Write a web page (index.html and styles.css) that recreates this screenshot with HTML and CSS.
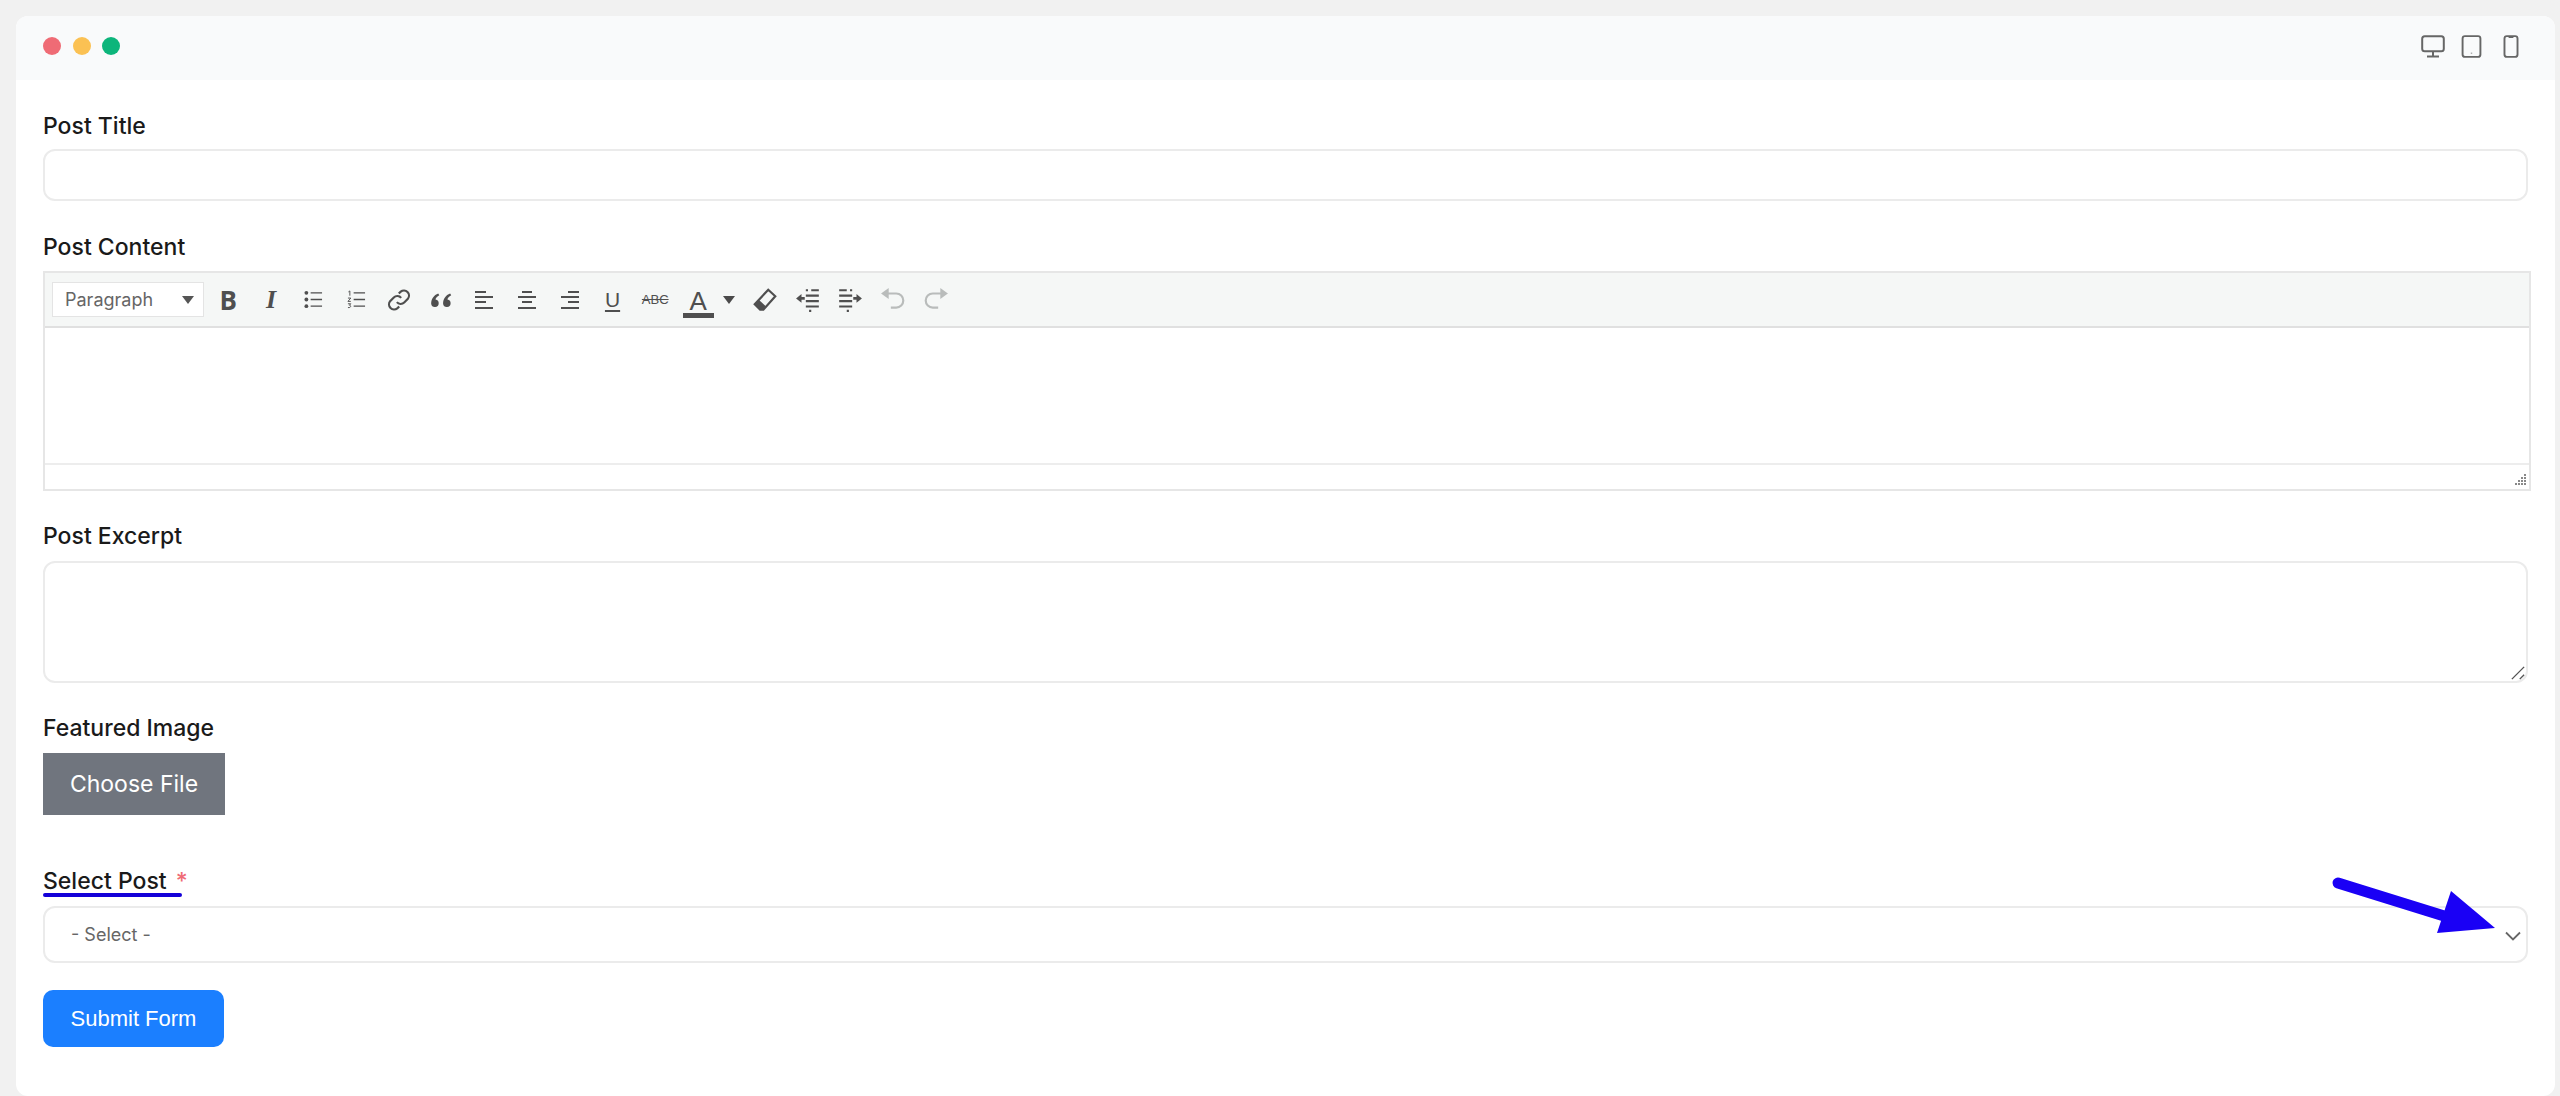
FILE: index.html
```html
<!DOCTYPE html>
<html lang="en">
<head>
<meta charset="utf-8">
<title>Form preview</title>
<link rel="stylesheet" href="styles.css">
</head>
<body>
<div class="window">
  <header class="bar">
    <div class="dots"><span class="dot red"></span><span class="dot yellow"></span><span class="dot green"></span></div>
    <div class="devices">
      <svg class="dev dev-monitor" viewBox="0 0 24 23"><rect x="1.2" y="1.2" width="21.6" height="15" rx="2.5"/><path d="M12 16.5v4.5M6 21.5h12"/></svg>
      <svg class="dev dev-tablet" viewBox="0 0 21 24"><rect x="1.2" y="1.2" width="18.6" height="21.6" rx="2.5"/><path class="thin" d="M10.5 18.6v.8"/></svg>
      <svg class="dev dev-phone" viewBox="0 0 16 24"><rect x="1.2" y="1.2" width="13.6" height="21.6" rx="2.5"/><path d="M5.5 2h5"/></svg>
    </div>
  </header>
  <main class="form">
    <label class="label l-title">Post Title</label>
    <div class="input"></div>

    <label class="label l-content">Post Content</label>
    <div class="editor">
      <div class="toolbar">
        <div class="format"><span>Paragraph</span><i class="caret"></i></div>
        <span class="tb tb-b">B</span>
        <span class="tb tb-i">I</span>
        <span class="tb"><svg class="ic" viewBox="0 0 20 20"><path class="hair" d="M7 3h12M7 10h12M7 17h12"/><circle class="fill" cx="2.5" cy="3" r="2"/><circle class="fill" cx="2.5" cy="10" r="2"/><circle class="fill" cx="2.5" cy="17" r="2"/></svg></span>
        <span class="tb"><svg class="ic" viewBox="0 0 20 20"><path class="hair" d="M7 3h12M7 10h12M7 17h12"/><path class="thin" d="M1.5 2l1.5-1v5M1 8.5h3l-3 3.5h3M1 14.5h3l-1.5 1.5c2 0 2 3-1.5 2.5"/></svg></span>
        <span class="tb"><svg class="ic ic-xl" viewBox="0 0 24 24"><path d="M10 14a4.600 4.600 0 0 0 6.800.3l3.400-3.400a4.700 4.700 0 0 0-6.600-6.600l-1.800 1.800"/><path d="M14 10a4.600 4.600 0 0 0-6.800-.3l-3.400 3.400a4.700 4.700 0 0 0 6.600 6.600l1.800-1.800"/></svg></span>
        <span class="tb"><svg class="ic ic-xl" viewBox="0 0 24 24"><path class="fill" d="M2 15.500c0-4.500 2.500-8 6.500-9.500l1 1.600c-2 1-3.200 2.400-3.500 3.900a3.500 3.500 0 1 1-4 4zM13 15.500c0-4.500 2.500-8 6.500-9.500l1 1.600c-2 1-3.200 2.400-3.500 3.900a3.500 3.500 0 1 1-4 4z"/></svg></span>
        <span class="tb"><svg class="ic ic-al" viewBox="0 0 20 20"><path d="M1 2h11M1 7h18M1 12h11M1 18h18"/></svg></span>
        <span class="tb"><svg class="ic ic-al" viewBox="0 0 20 20"><path d="M5 2h10M1 7h18M5 12h10M1 18h18"/></svg></span>
        <span class="tb"><svg class="ic ic-al" viewBox="0 0 20 20"><path d="M8 2h11M1 7h18M8 12h11M1 18h18"/></svg></span>
        <span class="tb tb-u">U</span>
        <span class="tb tb-s">ABC</span>
        <span class="tb tb-a">A</span>
        <span class="tb-caret"><i class="caret dark"></i></span>
        <span class="tb"><svg class="ic ic-xl" viewBox="0 0 24 24"><path d="M15 2.500l6.500 6L10.500 21h-3l-5-5z"/><path class="fill" d="M2.500 16l5 5h3l2.500-3-6.500-6z"/></svg></span>
        <span class="tb"><svg class="ic ic-xl" viewBox="0 0 24 24"><path d="M10 3h2M15 3h7M10 8h12M10 13h12M10 18h12M13 22h2"/><path class="fill" d="M1 10.500l5-4v8z"/><path class="thick" d="M4 10.500h5"/></svg></span>
        <span class="tb"><svg class="ic ic-xl" viewBox="0 0 24 24"><path d="M2 3h7M12 3h2M2 8h12M2 13h12M2 18h12M9 22h2"/><path class="fill" d="M23 10.500l-5-4v8z"/><path class="thick" d="M20 10.500h-5"/></svg></span>
        <span class="tb"><svg class="ic ic-xl off" viewBox="0 0 24 24"><path class="fill" d="M1 6l7-5v10z"/><path d="M7 6h8a6.500 6.500 0 0 1 0 13h-5"/></svg></span>
        <span class="tb"><svg class="ic ic-xl off" viewBox="0 0 24 24"><path class="fill" d="M23 6l-7-5v10z"/><path d="M17 6H9a6.500 6.500 0 0 0 0 13h5"/></svg></span>
      </div>
      <div class="edit-area"></div>
      <div class="status">
        <svg class="grip" viewBox="0 0 14 14"><path d="M11 1h2v2h-2zM8 4h2v2H8zM11 4h2v2h-2zM5 7h2v2H5zM8 7h2v2H8zM11 7h2v2h-2zM2 10h2v2H2zM5 10h2v2H5zM8 10h2v2H8zM11 10h2v2h-2z"/></svg>
      </div>
    </div>

    <label class="label l-excerpt">Post Excerpt</label>
    <div class="input area">
      <svg class="resize" viewBox="0 0 16 16"><path d="M1 15L15 1M10 15l5-5"/></svg>
    </div>

    <label class="label l-image">Featured Image</label>
    <button class="file-btn" type="button">Choose File</button>

    <label class="label l-select">Select Post <span class="req">*</span></label>
    <div class="input select">
      <span>- Select -</span>
      <svg class="chev" viewBox="0 0 16 10"><path d="M1 1.500l7 7 7-7"/></svg>
    </div>

    <button class="submit" type="button">Submit Form</button>
  </main>

  <svg class="annot-arrow" viewBox="0 0 180 70"><path class="shaft" d="M6 6L125 43"/><path class="head" d="M119 14L105 56 163 51z"/></svg>
  <span class="annot-line"></span>
</div>
</body>
</html>
```
FILE: styles.css
```css
* { box-sizing: border-box; }
html, body { margin: 0; height: 100%; }
body {
  background: #f1f1f1;
  padding: 16px 5px 0 16px;
  font-family: Inter, "Liberation Sans", sans-serif;
  color: #1a1a1a;
  overflow: hidden;
}
.window {
  position: relative;
  height: 1080px;
  background: #fff;
  border-radius: 12px;
  overflow: hidden;
}
.bar {
  height: 64px;
  background: #f9fafb;
  display: flex;
  align-items: center;
  justify-content: space-between;
  padding: 0 36px 0 27px;
}
.dots { display: flex; gap: 11.5px; margin-top: -4px; }
.dot { width: 18px; height: 18px; border-radius: 50%; }
.red { background: #ef6b75; }
.yellow { background: #fbc153; }
.green { background: #0db57b; }
.devices { display: flex; align-items: center; gap: 18px; margin-top: -4px; }
.dev { fill: none; stroke: #666; stroke-width: 2; display: block; height: 23px; }
.dev-monitor { width: 24px; margin-right: -2px; }
.dev-tablet { width: 21px; margin-right: 3px; }
.dev-phone { width: 16px; }
.dev .thin { stroke-width: 1.5; }

.form { padding: 0 27px; display: flex; flex-direction: column; align-items: flex-start; }
.label { display: block; font-size: 23px; font-weight: 450; line-height: 30px; }
.l-title { margin-top: 31px; margin-bottom: 8px; }
.l-content { margin-top: 31px; margin-bottom: 9px; }
.l-excerpt { margin-top: 30px; margin-bottom: 10px; }
.l-image { margin-top: 30px; margin-bottom: 10px; }
.l-select { margin-top: 51px; margin-bottom: 10px; }
.input {
  width: 100%;
  height: 52px;
  border: 2px solid #ebebeb;
  border-radius: 12px;
  background: #fff;
  position: relative;
}
.area { height: 122px; }
.resize { position: absolute; right: 1px; bottom: 1px; width: 14px; height: 14px; fill: none; stroke: #555; stroke-width: 1.6; }
.select {
  height: 57px;
  display: flex;
  align-items: center;
  justify-content: space-between;
  padding: 0 5px 0 26px;
  font-size: 18px;
  color: #666;
}
.chev { width: 16px; height: 10px; fill: none; stroke: #666; stroke-width: 1.8; margin-top: 2px; }

.editor { width: calc(100% + 3px); border: 2px solid #e6e6e6; background: #fff; }
.toolbar {
  height: 55px;
  background: #f5f7f6;
  border-bottom: 2px solid #e0e0e0;
  display: flex;
  align-items: center;
  padding-left: 7px;
}
.format {
  width: 152px;
  height: 35px;
  background: #fff;
  border: 1px solid #e4e4e4;
  display: flex;
  align-items: center;
  justify-content: space-between;
  padding: 0 9px 0 12px;
  font-size: 18px;
  color: #666;
  margin-right: 3px;
}
.caret { width: 0; height: 0; border: 6px solid transparent; border-top: 8px solid #555; border-bottom: 0; display: block; }
.caret.dark { border-top-color: #4a4a4a; }
.tb {
  width: 42.7px;
  height: 34px;
  display: flex;
  align-items: center;
  justify-content: center;
  color: #4f4f4f;
  font-family: "Liberation Sans", sans-serif;
  flex: none;
}
.tb-b { font-size: 26px; font-weight: 700; font-family: "Open Sans", sans-serif; }
.tb-i { font-size: 26px; font-weight: 700; font-style: italic; font-family: "Liberation Serif", serif; }
.tb-u { font-size: 21px; text-decoration: underline; text-underline-offset: 3px; text-decoration-thickness: 2px; }
.tb-s { font-size: 13px; text-decoration: line-through; }
.tb-a { width: 31px; margin-left: 6px; font-size: 26px; border-bottom: 5px solid #4f4f4f; height: 30px; line-height: 26px; align-items: flex-start; margin-top: 6px; }
.tb-caret { width: 30px; display: flex; justify-content: center; flex: none; }
.ic { width: 19px; height: 19px; fill: none; stroke: #4f4f4f; stroke-width: 2; overflow: visible; }
.ic-al { width: 20px; height: 20px; stroke-width: 2.2; }
.ic-xl { width: 26px; height: 26px; }
.ic .fill { fill: #4f4f4f; stroke: none; }
.ic .thin { stroke-width: 1; }
.ic .thick { stroke-width: 2.5; }
.ic .hair { stroke-width: 1.5; }
.ic.off { stroke: #b9bcbb; }
.ic.off .fill { fill: #b9bcbb; }
.edit-area { height: 135px; }
.status {
  height: 26px;
  border-top: 2px solid #ededed;
  display: flex;
  justify-content: flex-end;
  align-items: flex-end;
  padding: 0 2px 2px 0;
}
.grip { width: 14px; height: 14px; fill: #888; display: block; }

.file-btn {
  width: 182px;
  height: 62px;
  border: 0;
  background: #70757e;
  color: #fff;
  font-family: Inter, sans-serif;
  font-size: 23px;
  padding: 0;
}
.req { color: #ef6b75; margin-left: 3px; }
.submit {
  margin-top: 27px;
  width: 181px;
  height: 57px;
  border: 0;
  border-radius: 10px;
  background: #1b7fff;
  color: #fff;
  font-family: "Liberation Sans", sans-serif;
  font-size: 22px;
  padding: 0;
}

.annot-arrow {
  position: absolute;
  left: 2316px;
  top: 861px;
  width: 180px;
  height: 70px;
  overflow: visible;
}
.shaft { fill: none; stroke: #1a00f5; stroke-width: 11; stroke-linecap: round; }
.head { fill: #1a00f5; }
.annot-line {
  position: absolute;
  left: 27px;
  top: 877px;
  width: 139px;
  height: 4px;
  border-radius: 2px;
  background: #1400d8;
}
```
